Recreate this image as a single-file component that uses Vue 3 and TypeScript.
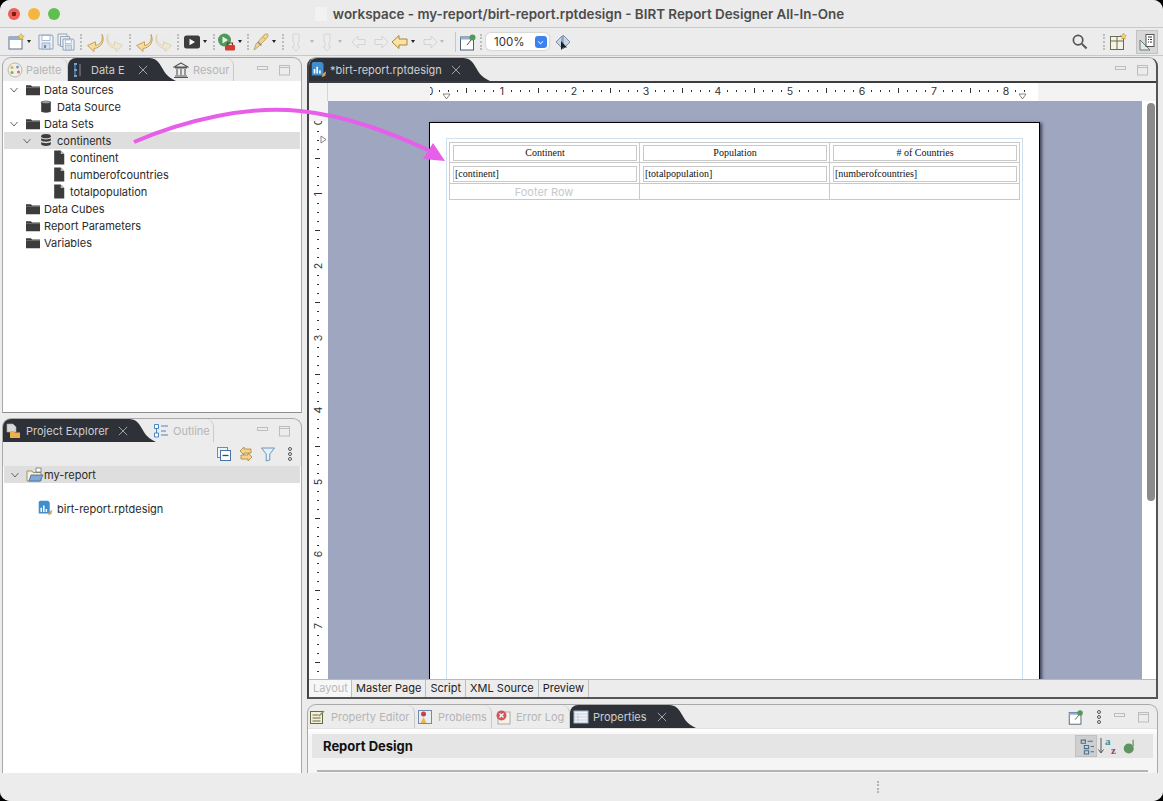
<script setup lang="ts">
interface TreeRow { label: string; icon: string; level: number; open?: boolean; selected?: boolean }
interface ToolItem { icon: string; kind: string }

const tree: TreeRow[] = [
  { label: 'Data Sources', icon: 'folder', level: 0, open: true },
  { label: 'Data Source', icon: 'db', level: 1 },
  { label: 'Data Sets', icon: 'folder', level: 0, open: true },
  { label: 'continents', icon: 'dbs', level: 1, open: true, selected: true },
  { label: 'continent', icon: 'doc', level: 2 },
  { label: 'numberofcountries', icon: 'doc', level: 2 },
  { label: 'totalpopulation', icon: 'doc', level: 2 },
  { label: 'Data Cubes', icon: 'folder', level: 0 },
  { label: 'Report Parameters', icon: 'folder', level: 0 },
  { label: 'Variables', icon: 'folder', level: 0 },
]

const toolbar: ToolItem[] = [
  { icon: 'new', kind: 'ic' }, { icon: '', kind: 'dd' }, { icon: '', kind: 'gap' },
  { icon: 'save', kind: 'ic' }, { icon: 'saveall', kind: 'ic' }, { icon: '', kind: 'sep' },
  { icon: 'undo', kind: 'ic' }, { icon: 'redo', kind: 'ic' }, { icon: '', kind: 'sep' },
  { icon: 'undo', kind: 'ic' }, { icon: 'redo', kind: 'ic' }, { icon: '', kind: 'sep8' },
  { icon: 'play', kind: 'ic' }, { icon: '', kind: 'dd' }, { icon: '', kind: 'sep7' },
  { icon: 'debug', kind: 'ic' }, { icon: '', kind: 'dd' }, { icon: '', kind: 'sep6' },
  { icon: 'brush', kind: 'ic' }, { icon: '', kind: 'dd' }, { icon: '', kind: 'sep4' },
  { icon: 'fadeDown', kind: 'ic' }, { icon: '', kind: 'ddw' },
  { icon: 'fadeDown', kind: 'ic' }, { icon: '', kind: 'ddf' }, { icon: '', kind: 'gap5' },
  { icon: 'fadeLeft', kind: 'ic' }, { icon: 'fadeRight', kind: 'ic' },
  { icon: 'left', kind: 'ic' }, { icon: '', kind: 'dd' }, { icon: '', kind: 'gap1' },
  { icon: 'fadeRight', kind: 'ic' }, { icon: '', kind: 'ddf' }, { icon: '', kind: 'line' },
  { icon: 'pin', kind: 'ic' }, { icon: '', kind: 'sep2' },
]

const hNumbers = [0, 1, 2, 3, 4, 5, 6, 7, 8]
const vNumbers = [0, 1, 2, 3, 4, 5, 6, 7]
const hTicks = Array.from({ length: 67 }, (_, i) => i)
const vTicks = Array.from({ length: 65 }, (_, i) => i)
const bottomTabs = ['Master Page', 'Script', 'XML Source', 'Preview']
const columns = [
  { head: 'Continent', cell: '[continent]', foot: 'Footer Row' },
  { head: 'Population', cell: '[totalpopulation]', foot: '' },
  { head: '# of Countries', cell: '[numberofcountries]', foot: '' },
]
</script>

<template>
  <div class="window">
    <svg class="defs" width="0" height="0" aria-hidden="true">
      <symbol id="folder" viewBox="0 0 16 16"><path d="M0 3h5.500l1.500 1.500h9V14.500H0z" fill="#3c3c3c"/><path d="M0 5.800h16" stroke="#8a8a8a" stroke-width=".7"/></symbol>
      <symbol id="db" viewBox="0 0 16 16"><path d="M2.500 3C2.500 .8 13.500 .8 13.500 3V13.500c0 2.200-11 2.200-11 0z" fill="#3c3c3c"/><ellipse cx="8" cy="3.100" rx="4.700" ry="1.300" fill="#9a9a9a"/></symbol>
      <symbol id="dbs" viewBox="0 0 16 16"><ellipse cx="8" cy="3" rx="5.500" ry="2.300" fill="#3c3c3c"/><path d="M2.500 5.200c1 2.200 10 2.200 11 0v2.600c-1 2.200-10 2.200-11 0zM2.500 9.400c1 2.200 10 2.200 11 0v3c-1 2.600-10 2.600-11 0z" fill="#3c3c3c"/></symbol>
      <symbol id="doc" viewBox="0 0 16 16"><path d="M2.500 0h7.500l4 4v12H2.500z" fill="#3c3c3c"/><path d="M10 0v4h4" fill="#bbb"/></symbol>
      <symbol id="new" viewBox="0 0 20 20"><rect x="3" y="5" width="13" height="12" fill="#fff" stroke="#5a7088"/><rect x="3" y="5" width="13" height="3" fill="#8fb0d8"/><path d="M15 1.500l1 2.200 2.300.3-1.700 1.500.5 2.300-2.100-1.200-2 1.200.4-2.300L12 4l2.300-.3z" fill="#f3d36b" stroke="#b8923a" stroke-width=".5"/></symbol>
      <symbol id="save" viewBox="0 0 20 20"><path d="M3 3h13l1 1v13H3z" fill="#eef2f7" stroke="#8ba3bf"/><rect x="6" y="3.500" width="8" height="5" fill="#fff" stroke="#8ba3bf" stroke-width=".7"/><rect x="6" y="11" width="8" height="6" fill="#d6e0ec" stroke="#8ba3bf" stroke-width=".7"/><rect x="8" y="13" width="2" height="3" fill="#6d8cb0"/></symbol>
      <symbol id="saveall" viewBox="0 0 20 20"><path d="M2 2h9v3H5v8H2z" fill="#eef2f7" stroke="#98a6b6"/><path d="M4.500 4.500h9v3h-6v7h-3z" fill="#e8edf3" stroke="#98a6b6"/><path d="M7 7h10l1 1v10H7z" fill="#eef2f7" stroke="#8ba3bf"/><rect x="9.500" y="8" width="6" height="3.500" fill="#fff" stroke="#8ba3bf" stroke-width=".6"/><rect x="9.500" y="13" width="6" height="5" fill="#cfdbe9" stroke="#8ba3bf" stroke-width=".6"/></symbol>
      <symbol id="undo" viewBox="0 0 20 20"><path d="M17 2.500c1.500 6-2 10.500-6.500 11V9.800L2.500 13.500 9 19.500v-3C15.500 16 20.500 9.500 17 2.500z" fill="#f7dca0" stroke="#c29b52" stroke-width=".9" stroke-linejoin="round"/></symbol>
      <symbol id="redo" viewBox="0 0 20 20" opacity=".55"><path d="M3 2.500c-1.500 6 2 10.500 6.500 11V9.800l8 3.700-6.500 6v-3C4.500 16-.5 9.500 3 2.500z" fill="#f4e3c0" stroke="#cdb88f" stroke-width=".9" stroke-linejoin="round"/></symbol>
      <symbol id="play" viewBox="0 0 20 20"><rect x="2" y="3.500" width="16" height="13" rx="2.500" fill="#3d3d3f"/><path d="M7.500 6.800v6.400l5.500-3.200z" fill="#fff"/></symbol>
      <symbol id="debug" viewBox="0 0 20 20"><circle cx="7.500" cy="8" r="6.500" fill="#4f9a5a"/><path d="M5.500 4.500v7l5.500-3.500z" fill="#e6f3e6"/><rect x="8" y="13" width="10" height="5.500" rx="1" fill="#d23a34"/><path d="M10.500 13v-2h5v2" fill="none" stroke="#8b2b26" stroke-width="1.200"/></symbol>
      <symbol id="brush" viewBox="0 0 20 20"><path d="M3 18l2-6 8-9c1-1 3.500-1.500 4-.5s-.5 3-1.500 4l-8.500 8.500z" fill="#f0d48e" stroke="#b29a63" stroke-width=".8"/><path d="M7 10l3.500 3.500" stroke="#8f8f8f" stroke-width="1.500"/><path d="M12 5l3 3" stroke="#d3a94f"/></symbol>
      <symbol id="fadeDown" viewBox="0 0 20 20" opacity=".45"><path d="M7 2h6v8h-1v5h2l-4 4-4-4h2v-5H7z" fill="#eeeeee" stroke="#bcbcbc"/></symbol>
      <symbol id="fadeLeft" viewBox="0 0 20 20" opacity=".5"><path d="M2 10l6-6v3.500h7v5H8V16z" fill="#eeeeee" stroke="#bdbdbd"/></symbol>
      <symbol id="fadeRight" viewBox="0 0 20 20" opacity=".5"><path d="M18 10l-6-6v3.500H5v5h7V16z" fill="#eeeeee" stroke="#bdbdbd"/></symbol>
      <symbol id="left" viewBox="0 0 20 20"><path d="M2 10l7-6.500V7h8v6H9v3.500z" fill="#fbe3a3" stroke="#a8853d" stroke-linejoin="round"/></symbol>
      <symbol id="pin" viewBox="0 0 20 20"><rect x="2.500" y="5" width="13" height="13" fill="#fff" stroke="#4a6076"/><rect x="2.500" y="5" width="13" height="2.500" fill="#8fb0d4"/><path d="M9 13l4-5" stroke="#555"/><circle cx="14.500" cy="5.500" r="3" fill="#4e9a58"/></symbol>
      <symbol id="close" viewBox="0 0 12 12"><path d="M1 1l10 10M11 1L1 11" stroke="currentColor" stroke-width="1"/></symbol>
      <symbol id="min" viewBox="0 0 14 14"><rect x="1.500" y="3.500" width="10" height="3" fill="none" stroke="currentColor"/></symbol>
      <symbol id="max" viewBox="0 0 14 14"><rect x="1.500" y="2.500" width="10" height="9.500" fill="none" stroke="currentColor"/><path d="M1.500 4.500h10" stroke="currentColor"/></symbol>
      <symbol id="tail" viewBox="0 0 36 24" preserveAspectRatio="none"><path d="M0 0C9 0 13 4 18 11 22 17 27 21 36 24H0z" fill="#2e3238"/></symbol>
      <symbol id="report" viewBox="0 0 20 20"><path d="M2 3a2 2 0 0 1 2-2h9l2 2v13H2z" fill="#3f8fd0"/><path d="M5 14V9M8 14V6.500M11 14v-3.500" stroke="#fff" stroke-width="1.800"/><path d="M13 18l1.500-4 3.500-2.500-1 5z" fill="#e99a45"/></symbol>
    </svg>

    <header class="titlebar">
      <div class="lights">
        <span class="light red"></span><span class="light yellow"></span><span class="light green"></span>
      </div>
      <span class="doc-ghost"></span>
      <span class="title">workspace - my-report/birt-report.rptdesign - BIRT Report Designer All-In-One</span>
    </header>

    <div class="toolbar">
      <template v-for="(item, i) in toolbar" :key="i">
        <svg v-if="item.kind === 'ic'" class="tool-icon"><use :href="'#' + item.icon" /></svg>
        <span v-else :class="'tool-' + item.kind"></span>
      </template>
      <div class="combo"><span class="combo-text">100%</span><span class="combo-btn"></span></div>
      <svg class="tool-icon view-icon" viewBox="0 0 20 20">
        <path d="M3 10l6-6v12zM10 3l7 7-7 7z" fill="#c6d6e8" stroke="#5e7a99" stroke-width=".8"/>
        <path d="M8 9v9l2.500-2.500H14z" fill="#1f1f1f"/>
      </svg>
      <div class="toolbar-right">
        <svg class="search" viewBox="0 0 18 18"><circle cx="7.500" cy="7.500" r="5" fill="none" stroke="#555" stroke-width="1.800"/><path d="M11.500 11.500l5 5" stroke="#555" stroke-width="2.200"/></svg>
        <span class="tool-sep"></span>
        <svg class="tool-icon" viewBox="0 0 20 20"><rect x="2.500" y="4.500" width="13" height="13" fill="#f6f3e6" stroke="#6a6a55"/><path d="M2.500 9h13M9 4.500v13" stroke="#6a6a55"/><path d="M15.500 1l1 2 2 .5-1.500 1.500.3 2.200-1.800-1-1.800 1 .3-2.200L12.500 3.500l2-.5z" fill="#f3d36b" stroke="#b8923a" stroke-width=".5"/></svg>
        <span class="persp">
          <svg class="tool-icon" viewBox="0 0 20 20"><path d="M3 8v10h10z" fill="#e4ebe4" stroke="#6b7d70"/><rect x="9" y="2.500" width="8" height="12" fill="#fff" stroke="#555"/><path d="M11 5h4M11 7.500h1M13 7.500h2M11 10h1M13 10h2" stroke="#333"/></svg>
        </span>
      </div>
    </div>

    <div class="workbench">
      <div class="left-col">
        <section class="panel top-panel">
          <div class="tabstrip">
            <div class="tab inactive palette-tab">
              <svg class="tab-icon" viewBox="0 0 16 16"><circle cx="8" cy="8" r="7" fill="#f1efe6" stroke="#b9b6a8"/><circle cx="5" cy="5.500" r="1.500" fill="#d6b54a"/><circle cx="10.500" cy="5" r="1.500" fill="#6fa3d8"/><circle cx="11.500" cy="10" r="1.500" fill="#d66f6f"/><circle cx="5" cy="10.500" r="1.500" fill="#72b377"/></svg>
              <span>Palette</span>
            </div>
            <div class="tab active data-tab">
              <svg class="tab-icon" viewBox="0 0 16 16"><path d="M4 2h3M4 8h3M4 14h3" stroke="#6fa3d8" stroke-width="1.800"/><path d="M5 2v12" stroke="#6fa3d8"/><path d="M10 2v12" stroke="#8d8d8d"/></svg>
              <span>Data E</span>
              <svg class="tab-close"><use href="#close" /></svg>
              <svg class="tab-tail"><use href="#tail" /></svg>
            </div>
            <div class="tab inactive res-tab">
              <svg class="tab-icon" viewBox="0 0 16 16"><path d="M8 1l7 4H1zM2 6h12M2 14h12M1 15.500h14M4 7v6M8 7v6M12 7v6" fill="none" stroke="#555" stroke-width="1.100"/></svg>
              <span>Resour</span>
            </div>
            <div class="win-btns">
              <svg class="win-btn"><use href="#min" /></svg>
              <svg class="win-btn"><use href="#max" /></svg>
            </div>
          </div>
          <div class="tree first-tree">
            <div v-for="row in tree" :key="row.label" class="row" :class="['lv' + row.level, { selected: row.selected }]">
              <svg v-if="row.open" class="chev" viewBox="0 0 10 10"><path d="M1.500 3l3.500 4 3.500-4" fill="none" stroke="#666" stroke-width="1"/></svg>
              <span v-else class="chev"></span>
              <svg class="row-icon"><use :href="'#' + row.icon" /></svg>
              <span class="row-label">{{ row.label }}</span>
            </div>
          </div>
        </section>

        <section class="panel bottom-panel">
          <div class="tabstrip">
            <div class="tab active project-tab">
              <svg class="tab-icon" viewBox="0 0 16 16"><path d="M2 1h6l3 3v5H2z" fill="#d8d8d8" stroke="#aaa" stroke-width=".6"/><path d="M5 8h4l1 1.500h5V15H5z" fill="#eeb04c"/></svg>
              <span>Project Explorer</span>
              <svg class="tab-close"><use href="#close" /></svg>
              <svg class="tab-tail"><use href="#tail" /></svg>
            </div>
            <div class="tab inactive outline-tab">
              <svg class="tab-icon" viewBox="0 0 16 16"><path d="M1.500 1.500h4v4h-4zM1.500 10h4v4h-4z" fill="#fff" stroke="#4a84c4"/><path d="M8 3h7M8 8h5M8 12h7" stroke="#4a84c4" stroke-width="1.200"/><path d="M3.500 5.500v4.500" stroke="#4a84c4"/></svg>
              <span>Outline</span>
            </div>
            <div class="win-btns">
              <svg class="win-btn"><use href="#min" /></svg>
              <svg class="win-btn"><use href="#max" /></svg>
            </div>
          </div>
          <div class="view-tools">
            <svg class="vt" viewBox="0 0 16 16"><rect x="1.500" y="1.500" width="10" height="10" fill="#eef3f9" stroke="#6d8cb0"/><rect x="4.500" y="4.500" width="10" height="10" fill="#fff" stroke="#4a74a4"/><path d="M6.500 9.500h6" stroke="#1f4f85" stroke-width="1.300"/></svg>
            <svg class="vt" viewBox="0 0 16 16"><path d="M2 5l4-4v2h7v4H6v2zM14 11l-4-4v2H3v4h7v2z" fill="#f6d386" stroke="#a8853d" stroke-width=".8"/></svg>
            <svg class="vt" viewBox="0 0 16 16"><path d="M1.500 2h13L9.800 8v6L6.200 15V8z" fill="#e5eff8" stroke="#6d94ba"/></svg>
            <svg class="vt dots" viewBox="0 0 8 16"><circle cx="4" cy="3" r="1.500" fill="none" stroke="#555"/><circle cx="4" cy="8" r="1.500" fill="none" stroke="#555"/><circle cx="4" cy="13" r="1.500" fill="none" stroke="#555"/></svg>
          </div>
          <div class="tree explorer">
            <div class="row selected project-row">
              <svg class="chev" viewBox="0 0 10 10"><path d="M1.500 3l3.500 4 3.500-4" fill="none" stroke="#666"/></svg>
              <svg class="project-icon" viewBox="0 0 18 16"><path d="M1 4h5l1 1.500h8V14H1z" fill="#f7f1dc" stroke="#8d7f4e" stroke-width=".8"/><path d="M3 14l2-6h12l-3 6z" fill="#7faad8" stroke="#3f6a9a" stroke-width=".8"/><path d="M10 1h5v4h-5z" fill="#fff" stroke="#666" stroke-width=".7"/></svg>
              <span class="row-label">my-report</span>
            </div>
            <div class="row file-row">
              <svg class="row-icon"><use href="#report" /></svg>
              <span class="row-label">birt-report.rptdesign</span>
            </div>
          </div>
        </section>
      </div>

      <div class="right-col">
        <section class="panel editor">
          <div class="tabstrip editor-strip">
            <div class="tab active editor-tab">
              <svg class="tab-icon" viewBox="0 0 20 20"><use href="#report" /></svg>
              <span>*birt-report.rptdesign</span>
              <svg class="tab-close"><use href="#close" /></svg>
              <svg class="tab-tail"><use href="#tail" /></svg>
            </div>
            <div class="win-btns edge">
              <svg class="win-btn"><use href="#min" /></svg>
              <svg class="win-btn"><use href="#max" /></svg>
            </div>
          </div>
          <div class="editor-body">
            <div class="design">
              <div class="ruler-row">
                <div class="ruler-corner"></div>
                <svg class="h-ruler" width="829" height="18">
                  <rect x="102" width="608" height="18" fill="#fff" />
                  <g v-for="t in hTicks" :key="t">
                    <rect v-if="t % 8 !== 0" :x="102 + t * 9" :y="t % 4 === 0 ? 5 : 7" width="1" :height="t % 4 === 0 ? 5 : 2" fill="#333" />
                  </g>
                  <text v-for="n in hNumbers" :key="n" class="ruler-num" :x="102 + n * 72" y="12" text-anchor="middle">{{ n }}</text>
                  <rect width="102" height="18" fill="#f3f3f3" />
                  <path d="M115 11h7l-3.500 5zM691 11h7l-3.500 5z" fill="#fff" stroke="#555" stroke-width=".7" />
                </svg>
              </div>
              <div class="design-main">
                <svg class="v-ruler" width="19" height="578">
                  <g v-for="t in vTicks" :key="t">
                    <rect v-if="t % 8 !== 0" :x="t % 4 === 0 ? 6 : 8" :y="21 + t * 9" :width="t % 4 === 0 ? 5 : 2" height="1" fill="#333" />
                  </g>
                  <text v-for="n in vNumbers" :key="n" class="ruler-num" :transform="`translate(13 ${21 + n * 72}) rotate(-90)`" text-anchor="middle">{{ n }}</text>
                  <rect width="19" height="20" fill="#f3f3f3" />
                  <path d="M12 35v7l5-3.500z" fill="#fff" stroke="#555" stroke-width=".7" />
                </svg>
                <div class="canvas">
                  <div class="page">
                    <div class="margin-box">
                      <div class="report-table">
                        <div v-for="(col, i) in columns" :key="i" class="col">
                          <div class="cell head-cell"><div class="label center">{{ col.head }}</div></div>
                          <div class="cell body-cell"><div class="label">{{ col.cell }}</div></div>
                          <div class="cell foot-cell">{{ col.foot }}</div>
                        </div>
                      </div>
                    </div>
                  </div>
                </div>
                <div class="scrollbar"><div class="thumb"></div></div>
              </div>
            </div>
            <div class="page-tabs">
              <span class="page-tab current">Layout</span>
              <span v-for="t in bottomTabs" :key="t" class="page-tab">{{ t }}</span>
            </div>
          </div>
        </section>

        <section class="panel props">
          <div class="tabstrip props-strip">
            <div class="tab inactive pe-tab">
              <svg class="tab-icon" viewBox="0 0 16 16"><rect x="1.500" y="2.500" width="12" height="12" fill="#f3f0d8" stroke="#6a6a4a"/><path d="M3.500 6h6M3.500 9h8M3.500 12h8" stroke="#6a6a4a"/><path d="M10 7l5-5" stroke="#7a9a52" stroke-width="1.500"/></svg>
              <span>Property Editor</span>
            </div>
            <div class="tab inactive prob-tab">
              <svg class="tab-icon" viewBox="0 0 16 16"><rect x="1.500" y="1.500" width="13" height="13" fill="#e9eef5" stroke="#6d8cb0"/><circle cx="6.500" cy="5" r="2.500" fill="#cf3f3f"/><path d="M3.500 14l3-6 3 6z" fill="#e9b84a"/></svg>
              <span>Problems</span>
            </div>
            <div class="tab inactive err-tab">
              <svg class="tab-icon" viewBox="0 0 16 16"><rect x="3" y="3" width="12" height="12" fill="#f6f3e6" stroke="#aaa"/><circle cx="6.500" cy="6.500" r="5" fill="#d1555c"/><path d="M4.500 4.500l4 4M8.500 4.500l-4 4" stroke="#fff" stroke-width="1.300"/></svg>
              <span>Error Log</span>
            </div>
            <div class="tab active props-tab">
              <svg class="tab-icon" viewBox="0 0 16 16"><rect x="1" y="2" width="14" height="12" fill="#f0f3f7" stroke="#9fb3c9"/><path d="M1 5h14M1 8h14M1 11h14M5 5v9" stroke="#bcc9d8" stroke-width=".8"/></svg>
              <span>Properties</span>
              <svg class="tab-close"><use href="#close" /></svg>
              <svg class="tab-tail"><use href="#tail" /></svg>
            </div>
            <div class="win-btns props-btns">
              <svg class="tool-icon small"><use href="#pin" /></svg>
              <svg class="vt dots" viewBox="0 0 8 16"><circle cx="4" cy="3" r="1.500" fill="none" stroke="#555"/><circle cx="4" cy="8" r="1.500" fill="none" stroke="#555"/><circle cx="4" cy="13" r="1.500" fill="none" stroke="#555"/></svg>
              <svg class="win-btn"><use href="#min" /></svg>
              <svg class="win-btn"><use href="#max" /></svg>
            </div>
          </div>
          <div class="props-body">
            <div class="props-head">
              <span class="props-title">Report Design</span>
              <div class="props-actions">
                <span class="act on"><svg viewBox="0 0 16 16"><path d="M3 2h4v3H3zM6 7h4v3H6zM6 12h4v3H6z" fill="none" stroke="#47708f"/><path d="M9 3h5M12 8h3M12 13h3" stroke="#47708f"/></svg></span>
                <span class="act"><svg class="az-icon" viewBox="0 0 20 20"><path d="M3 2v14M.5 13.500L3 17l2.500-3.500" fill="none" stroke="#555"/><text x="7" y="9" class="az a">a</text><text x="13" y="18" class="az z">z</text></svg></span>
                <span class="act"><svg viewBox="0 0 16 16"><circle cx="7" cy="10" r="4" fill="#5d9560"/><path d="M10.500 8V3" fill="none" stroke="#5d9560"/></svg></span>
              </div>
            </div>
            <div class="props-line"></div>
          </div>
        </section>
      </div>
    </div>

    <footer class="statusbar"><span class="sash"></span></footer>

    <svg class="callout" width="1163" height="801" viewBox="0 0 1163 801">
      <path d="M134 142C185 120 250 105 300 111 350 116 395 135 428 150" fill="none" stroke="#e75ee8" stroke-width="4" />
      <path d="M433 143L445 161 423 159z" fill="#e75ee8" />
    </svg>
  </div>
</template>

<style>
html, body { margin: 0; background: #000; }
</style>

<style scoped>
.window { position: relative; width: 1163px; height: 801px; background: #ececec; border-radius: 10px; overflow: hidden; display: flex; flex-direction: column; font-family: Inter, "Liberation Sans", sans-serif; font-size: 11px; color: #222; }
.defs { position: absolute; }
.titlebar { height: 28px; flex: none; display: flex; align-items: center; justify-content: center; position: relative; border-bottom: 1px solid #c9c9c9; box-sizing: border-box; background: #ebebeb; padding-right: 4px; }
.lights { position: absolute; left: 8px; top: 8px; display: flex; gap: 8px; }
.light { width: 12px; height: 12px; border-radius: 50%; }
.red { background: radial-gradient(circle, #7a1a16 0 2px, #ee5f57 2.5px); }
.yellow { background: #f5b63f; }
.green { background: #5fc04f; }
.doc-ghost { width: 12px; height: 14px; background: #f2f2f2; margin-right: 6px; }
.title { font-size: 13.4px; font-weight: 600; color: #4c4c4c; }
.toolbar { height: 28px; flex: none; box-sizing: border-box; display: flex; align-items: center; padding-left: 6px; border-bottom: 1px solid #c9c9c9; }
.tool-icon { width: 20px; height: 20px; flex: none; }
.tool-icon.small { width: 18px; height: 18px; }
.tool-dd, .tool-ddf, .tool-ddw { width: 0; height: 0; border-left: 2.500px solid transparent; border-right: 2.500px solid transparent; border-top: 3px solid #222; margin: 0 3px 0 1px; flex: none; }
.tool-ddf, .tool-ddw { border-top-color: #b8b8b8; }
.tool-ddw { margin-left: 4px; }
.tool-gap { width: 2px; flex: none; }
.tool-gap5 { width: 5px; flex: none; }
.tool-gap1 { width: 1px; flex: none; }
.tool-sep, .tool-sep8, .tool-sep6, .tool-sep7, .tool-sep4, .tool-sep2 { width: 0; height: 16px; border-left: 2px dotted #bdbdbd; flex: none; }
.tool-sep { margin: 0 3px 0 4px; }
.tool-sep8 { margin: 0 3px; }
.tool-sep6 { margin: 0 2px; }
.tool-sep7 { margin: 0 2px 0 3px; }
.tool-sep4 { margin: 0 2px 0 3px; }
.tool-sep2 { margin: 0 2px 0 2px; }
.tool-line { width: 1px; height: 20px; background: #c6c6c6; margin: 0 2px 0 8px; flex: none; }
.combo { width: 63px; height: 17px; box-sizing: border-box; background: #fff; border-radius: 5px; box-shadow: 0 0 1px 1px #d6d6d6; display: flex; align-items: center; justify-content: space-between; padding: 0 2px 0 8px; font-size: 11.5px; color: #333; flex: none; margin-left: 2px; }
.combo-btn { width: 12px; height: 12px; border-radius: 3px; background: #3b82f0; position: relative; }
.combo-btn::after { content: ""; position: absolute; left: 3px; top: 3px; width: 4px; height: 4px; border-right: 1.300px solid #fff; border-bottom: 1.300px solid #fff; transform: rotate(45deg) scale(.8); }
.view-icon { margin-left: 4px; }
.toolbar-right { margin-left: auto; display: flex; align-items: center; padding-right: 5px; }
.search { width: 17px; height: 17px; margin-right: 11px; }
.persp { width: 22px; height: 24px; background: #d8d8d8; border: 1px solid #c2c2c2; box-sizing: border-box; display: flex; align-items: center; justify-content: center; margin-left: 8px; }
.workbench { flex: 1; min-height: 0; display: flex; padding: 1px 5px 0 2px; gap: 5px; }
.left-col { width: 300px; flex: none; display: flex; flex-direction: column; gap: 5px; }
.right-col { flex: 1; min-width: 0; display: flex; flex-direction: column; gap: 5px; }
.panel { box-sizing: border-box; border: 1px solid #a9a9a9; border-radius: 9px 9px 0 0; display: flex; flex-direction: column; min-height: 0; background: #ececec; }
.top-panel { height: 356px; border-bottom-color: #8e8e8e; }
.bottom-panel { flex: 1; border-bottom: none; }
.tabstrip { height: 23px; flex: none; display: flex; align-items: stretch; position: relative; }
.tab { display: flex; align-items: center; position: relative; box-sizing: border-box; height: 23px; white-space: nowrap; flex: none; }
.tab.inactive { color: #b5b5b5; border-right: 1px solid #c9c9c9; border-radius: 8px 8px 0 0; }
.tab.active { background: #2e3238; color: #cfcfcf; border-radius: 8px 0 0 0; z-index: 1; }
.tab-icon { width: 16px; height: 16px; flex: none; margin-right: 5px; }
.tab-close { width: 10px; height: 10px; color: #b9b9b9; flex: none; margin-left: 13px; }
.tab-tail { position: absolute; left: 100%; top: 0; width: 27px; height: 23px; margin-left: -1px; }
.palette-tab { width: 65px; padding-left: 4px; }
.palette-tab .tab-icon { margin-right: 3px; }
.data-tab { width: 82px; padding-left: 2px; }
.res-tab { width: 84px; padding-left: 23px; }
.res-tab .tab-icon { margin-right: 4px; }
.win-btns { margin-left: auto; display: flex; align-items: center; gap: 8px; padding-right: 9px; color: #bdbdbd; }
.win-btns.edge { padding-right: 6px; }
.win-btn { width: 14px; height: 14px; }
.tree { flex: 1; background: #fff; }
.row { height: 17px; display: flex; align-items: center; }
.row.selected { background: #dedede; margin: 0 1px; }
.lv0 { padding-left: 6px; }
.lv1 { padding-left: 19px; }
.lv2 { padding-left: 32px; }
.row.selected.lv1 { padding-left: 18px; }
.chev { width: 10px; height: 10px; flex: none; margin-right: 3px; }
.row-icon { width: 14px; height: 15px; flex: none; margin-left: 4px; margin-right: 4px; }
.row-label { color: #2a2a2a; font-size: 11px; }
.project-tab { width: 127px; padding-left: 2px; }
.project-tab .tab-close { margin-left: 9px; }
.outline-tab { width: 84px; padding-left: 23px; }
.outline-tab .tab-icon { margin-right: 4px; }
.view-tools { height: 24px; flex: none; display: flex; align-items: center; justify-content: flex-end; gap: 6px; padding-right: 7px; }
.vt { width: 16px; height: 16px; flex: none; }
.vt.dots { width: 8px; margin-left: 4px; }
.project-row { padding-left: 6px; }
.project-icon { width: 18px; height: 16px; margin: 0 0 0 3px; }
.file-row { margin-top: 17px; padding-left: 34px; }
.file-row .row-icon { width: 17px; height: 17px; margin: 0 3px 0 0; }
.editor { height: 642px; flex: none; border-color: #555; border-width: 0 2px 2px 2px; border-top: 1px solid #a9a9a9; border-left-color: #444; }
.editor-tab { width: 155px; padding-left: 1px; }
.editor-tab .tab-close { margin-left: 9px; }
.editor-tab .tab-icon { width: 18px; height: 18px; margin-right: 2px; }
.editor-strip { border-bottom: 2px solid #3a3d42; height: 25px; box-sizing: border-box; }
.editor-body { flex: 1; min-height: 0; display: flex; flex-direction: column; background: #fff; }
.design { flex: 1; min-height: 0; display: flex; flex-direction: column; }
.ruler-row { height: 18px; flex: none; display: flex; background: #f3f3f3; }
.ruler-corner { width: 19px; height: 18px; flex: none; background: #f3f3f3; border-right: 1px solid #d6d6d6; box-sizing: border-box; }
.h-ruler { flex: none; }
.ruler-num { font-family: Inter, "Liberation Sans", sans-serif; font-size: 10.500px; fill: #333; }
.design-main { flex: 1; min-height: 0; display: flex; overflow: hidden; }
.v-ruler { width: 19px; flex: none; background: #fff; }
.canvas { flex: 1; min-width: 0; background: #9fa6c0; padding: 21px 0 0 101px; overflow: hidden; }
.page { width: 611px; height: 700px; box-sizing: border-box; background: #fff; border: 1px solid #000; box-shadow: 2px 1px 3px #3f4255; padding: 15px 16px 0; }
.margin-box { height: 100%; border: 1px solid #cfe0ee; border-bottom: none; padding: 3px 2px 0; }
.report-table { display: flex; border: 1px solid #c9c9c9; border-width: 1px 0 1px 1px; }
.col { flex: 1; min-width: 0; }
.cell { box-sizing: border-box; border-right: 1px solid #c9c9c9; padding: 2px 2px 2px 3px; font-family: "Liberation Serif", serif; font-size: 10px; color: #111; }
.head-cell { height: 20px; border-bottom: 1px solid #c9c9c9; }
.body-cell { height: 21px; border-bottom: 1px solid #c9c9c9; padding-top: 3px; }
.foot-cell { height: 15px; text-align: center; font-family: Inter, sans-serif; font-size: 11px; line-height: 13px; color: #c8c8c8; padding: 2px 3px 0 2px; }
.label { height: 16px; line-height: 14px; box-sizing: border-box; border: 1px solid #c9c9c9; padding-left: 1px; }
.label.center { text-align: center; padding-left: 0; }
.scrollbar { width: 14px; flex: none; background: #fff; padding: 2px 1px 0 5px; box-sizing: border-box; }
.thumb { height: 398px; background: #8b8b8b; border-radius: 4px; }
.page-tabs { height: 18px; flex: none; display: flex; background: #ececec; border-top: 1px solid #b9b9b9; box-sizing: border-box; }
.page-tab { padding: 0 4px; border-right: 1px solid #bdbdbd; line-height: 17px; font-size: 11px; color: #222; }
.page-tab.current { color: #b9b9b9; background: #f7f7f7; width: 43px; box-sizing: border-box; }
.props { flex: 1; border-bottom: none; }
.pe-tab { width: 107px; padding-left: 1px; }
.pe-tab .tab-icon { margin-right: 6px; }
.prob-tab { width: 77px; padding-left: 2px; }
.err-tab { width: 78px; padding-left: 3px; border-right: none; }
.props-tab { width: 100px; padding-left: 3px; }
.props-tab .tab-icon { margin-right: 4px; }
.props-tab .tab-close { margin-left: 10px; }
.props-btns { gap: 6px; padding-right: 6px; }
.props-btns .win-btn { margin-left: 4px; }
.props-body { flex: 1; padding: 5px 4px 0; border-top: 1px solid #e2e2e2; min-height: 0; overflow: hidden; background: linear-gradient(#fff, #f5f5f5 8px); }
.props-head { height: 24px; background: #e5e5e5; display: flex; align-items: center; padding-left: 11px; }
.props-title { font-size: 13px; font-weight: 700; color: #111; }
.props-actions { margin-left: auto; display: flex; align-items: center; padding-right: 12px; }
.act { width: 22px; height: 22px; display: flex; align-items: center; justify-content: center; }
.act svg { width: 20px; height: 20px; }
.act svg.az-icon { overflow: visible; }
.act.on { background: #cfcfcf; border: 1px solid #c0c0c0; box-sizing: border-box; }
.act.on svg { width: 17px; height: 17px; }
.az { font-family: "Liberation Serif", serif; font-weight: 700; font-size: 11px; }
.az.a { fill: #3b8f9a; }
.az.z { fill: #8a3f8e; }
.props-line { height: 2px; background: #b4b4b4; margin: 12px 5px 0; }
.statusbar { height: 28px; flex: none; display: flex; align-items: center; justify-content: center; background: #ececec; box-sizing: border-box; padding-left: 593px; }
.sash { height: 12px; border-left: 2px dotted #b3b3b3; }
.callout { position: absolute; left: 0; top: 0; pointer-events: none; }
</style>
